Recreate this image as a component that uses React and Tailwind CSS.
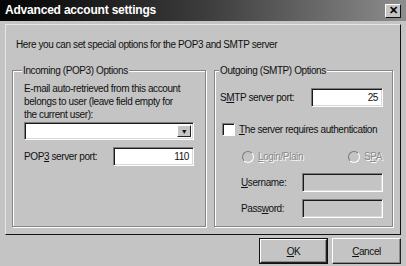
import React from 'react';

const sunken =
  'border border-t-[#7c7c7c] border-l-[#7c7c7c] border-b-white border-r-white shadow-[inset_1px_1px_0_#1a1a1a,inset_-1px_-1px_0_#d8d8d8]';

function Field({ value, disabled, className = '' }) {
  return (
    <div
      className={`${sunken} h-[19px] flex items-center justify-end pr-[4px] ${
        disabled ? 'bg-[#c4c4c4]' : 'bg-white'
      } ${className}`}
    >
      {value}
    </div>
  );
}

function Radio({ label, accel, rest }) {
  return (
    <div className="flex items-center gap-[4px] text-[#8a8a8a] [text-shadow:1px_1px_0_#fff]">
      <span className="w-[12px] h-[12px] rounded-full border border-t-[#7a7a7a] border-l-[#7a7a7a] border-b-white border-r-white bg-[#c4c4c4]" />
      <span>
        {label}
        <u>{accel}</u>
        {rest}
      </span>
    </div>
  );
}

function Button({ children, isDefault }) {
  return (
    <button
      className={`w-[69px] h-[26px] bg-[#c4c4c4] flex items-center justify-center ${
        isDefault ? 'border border-[#111]' : ''
      }`}
    >
      <span className="w-full h-full flex items-center justify-center border border-t-white border-l-white border-b-[#222] border-r-[#222] shadow-[inset_-1px_-1px_0_#8a8a8a]">
        {children}
      </span>
    </button>
  );
}

export default function App() {
  return (
    <div className="w-[406px] h-[266px] bg-[#c4c4c4] flex flex-col text-[10px] tracking-[-0.4px] leading-[13px] text-[#111] font-['Liberation_Sans',Arial,sans-serif]">
      {/* Title bar */}
      <div className="h-[21px] flex items-center pl-[5px] pr-[5px] bg-gradient-to-r from-[#060606] via-[#3c3c3c] to-[#8e8e8e]">
        <span className="text-white font-bold text-[12px] tracking-[-0.2px]">Advanced account settings</span>
        <span className="ml-auto w-[16px] h-[14px] bg-[#c4c4c4] border border-t-white border-l-white border-b-[#111] border-r-[#111] flex items-center justify-center text-[11px] font-bold leading-none text-black tracking-normal">
          ✕
        </span>
      </div>

      {/* Panel */}
      <div className="mt-[3px] mx-[5px] h-[211px] border border-t-[#e6e6e6] border-l-[#e6e6e6] border-b-[#111] border-r-[#111] px-[6px] pt-[13px]">
        <p className="pl-[4px]">Here you can set special options for the POP3 and SMTP server</p>

        <div className="mt-[13px] flex gap-[8px]">
          {/* Incoming */}
          <fieldset className="w-[194px] h-[163px] border border-[#868686] shadow-[inset_1px_1px_0_#fff,1px_1px_0_#fff] px-[11px]">
            <legend className="ml-[-2px] px-[1px] bg-[#c4c4c4]">Incoming (POP3) Options</legend>
            <p className="mt-[5px] pr-[10px]">
              E-mail auto-retrieved from this account belongs to user (leave field empty for the current user):
            </p>
            <div className={`${sunken} mt-[1px] h-[18px] bg-white flex justify-end p-[2px]`}>
              <span className="w-[14px] h-full bg-[#c4c4c4] border border-t-white border-l-white border-b-[#222] border-r-[#222] flex items-center justify-center text-[7px] leading-none">
                ▼
              </span>
            </div>
            <div className="mt-[7px] flex items-center">
              <span className="w-[89px]">
                POP<u>3</u> server port:
              </span>
              <Field value="110" className="flex-1" />
            </div>
          </fieldset>

          {/* Outgoing */}
          <fieldset className="w-[179px] h-[163px] border border-[#868686] shadow-[inset_1px_1px_0_#fff,1px_1px_0_#fff] pl-[5px] pr-[9px]">
            <legend className="ml-[-1px] px-[1px] bg-[#c4c4c4]">Outgoing (SMTP) Options</legend>
            <div className="mt-[11px] flex items-center">
              <span className="w-[91px]">
                S<u>M</u>TP server port:
              </span>
              <Field value="25" className="flex-1" />
            </div>
            <div className="mt-[16px] flex items-center gap-[4px] pl-[2px]">
              <span className="w-[13px] h-[13px] bg-white border border-t-[#7c7c7c] border-l-[#7c7c7c] border-b-white border-r-white shadow-[inset_1px_1px_0_#1a1a1a]" />
              <span>
                <u>T</u>he server requires authentication
              </span>
            </div>
            <div className="mt-[14px] flex items-center justify-between pl-[22px] pr-[1px]">
              <Radio label="" accel="L" rest="ogin/Plain" />
              <Radio label="S" accel="P" rest="A" />
            </div>
            <div className="mt-[10px] flex items-center pl-[21px]">
              <span className="w-[61px]">
                <u>U</u>sername:
              </span>
              <Field disabled className="flex-1" />
            </div>
            <div className="mt-[7px] flex items-center pl-[21px]">
              <span className="w-[61px]">
                Pass<u>w</u>ord:
              </span>
              <Field disabled className="flex-1" />
            </div>
          </fieldset>
        </div>
      </div>

      {/* Buttons */}
      <div className="mt-[3px] flex justify-end gap-[4px] pr-[5px]">
        <Button isDefault>
          <u>O</u>K
        </Button>
        <Button>
          <u>C</u>ancel
        </Button>
      </div>
    </div>
  );
}
